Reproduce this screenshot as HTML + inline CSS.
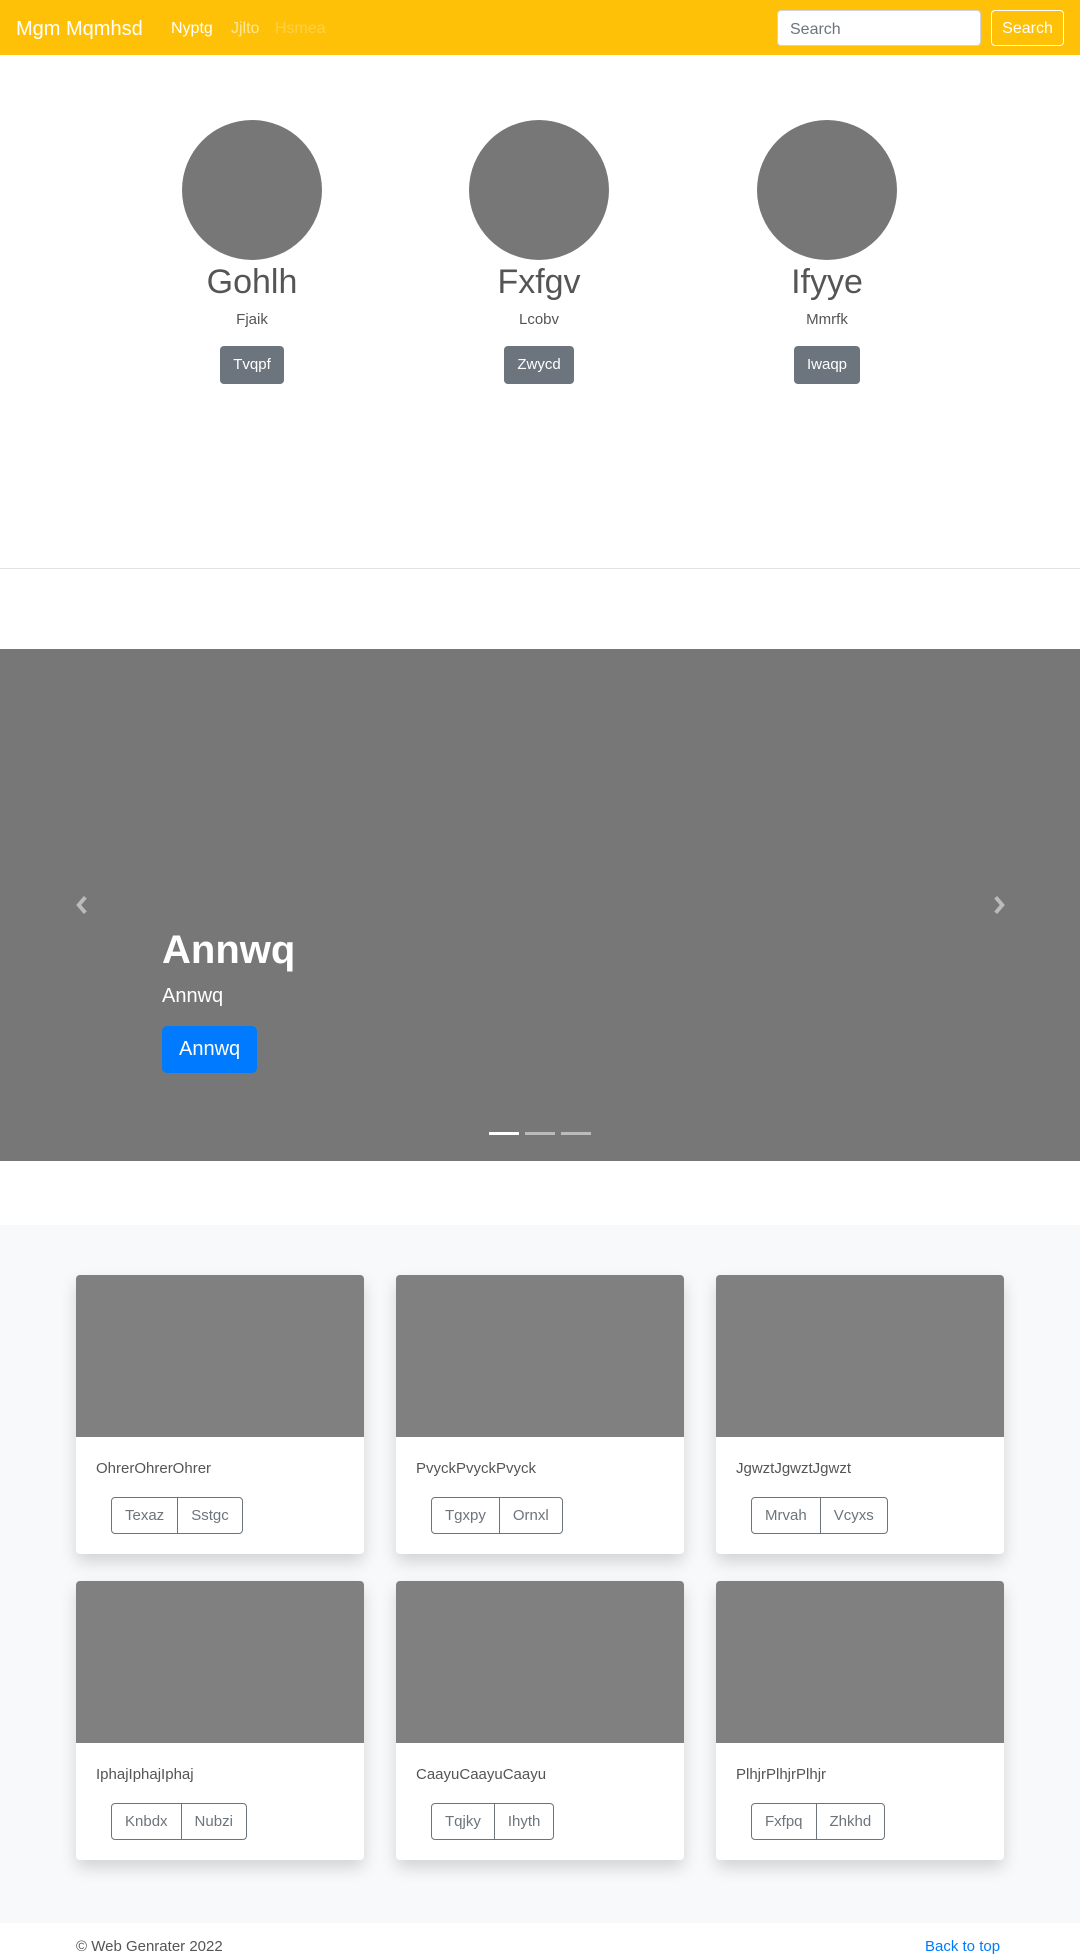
<!DOCTYPE html>
<html><head><meta charset="utf-8"><style>
*{box-sizing:border-box;margin:0;padding:0}
body{width:1080px;height:1957px;font-family:"Liberation Sans",sans-serif;color:#212529;background:#fff;position:relative;overflow:hidden}
.nav{position:absolute;left:0;top:0;width:1080px;height:55px;background:#ffc107}
.brand{position:absolute;left:16px;top:18px;font-size:20px;color:#fff}
.nl{position:absolute;top:20px;font-size:16px}
.sin{position:absolute;left:777px;top:10px;width:204px;height:36px;background:#fff;border:1px solid #ced4da;border-radius:4px;font-size:16px;color:#6c757d;padding:10px 12px 0}
.sbt{position:absolute;left:991px;top:10px;width:73px;height:36px;border:1px solid #fff;border-radius:4px;color:#fff;font-size:16px;text-align:center;line-height:36px}
.col{position:absolute;top:120px;width:240px;text-align:center}
.circ{width:140px;height:140px;border-radius:50%;background:#777;margin:0 auto}
.nm{font-size:34px;color:#555;margin-top:1px;line-height:42px}
.sub{font-size:15px;color:#555;margin-top:7px;line-height:20px}
.gb{display:inline-block;margin-top:16px;background:#6c757d;color:#fff;font-size:15px;height:38px;line-height:38px;padding:0 13px;border-radius:4px}
.hr{position:absolute;left:0;top:568px;width:1080px;height:1px;background:#e2e2e2}
.car{position:absolute;left:0;top:649px;width:1080px;height:512px;background:#777}
.arr{position:absolute;top:245px;width:22px;height:22px}
.cap{position:absolute;left:162px;top:276px;color:#fff}
.cap h1{font-size:40px;font-weight:bold;line-height:50px}
.cap p{font-size:20px;margin-top:10px}
.cap .b{display:inline-block;margin-top:18px;background:#007bff;border-radius:5px;font-size:20px;padding:0 17px;height:47px;line-height:47px}
.ind{position:absolute;top:483px;width:30px;height:3px;background:rgba(255,255,255,.5)}
.gray{position:absolute;left:0;top:1225px;width:1080px;height:698px;background:#f8f9fa}
.card{position:absolute;width:288px;height:279px;background:#fff;border-radius:4px;box-shadow:0 8px 16px rgba(0,0,0,.15);overflow:hidden}
.card .im{height:162px;background:#808080}
.card .t{position:absolute;left:20px;top:185px;font-size:15px;color:#555}
.bg{position:absolute;left:35px;top:222px;display:flex;border:1px solid #6c757d;border-radius:4px;height:37px}
.bg span{font-size:15px;color:#6c757d;padding:0 13px;line-height:35px}
.bg span+span{border-left:1px solid #6c757d}
.foot{position:absolute;top:1938px;font-size:15px}
</style></head><body>
<div class="nav">
<div class="brand">Mgm Mqmhsd</div>
<div class="nl" style="left:171px;color:#fff">Nyptg</div>
<div class="nl" style="left:231px;color:rgba(255,255,255,.6)">Jjlto</div>
<div class="nl" style="left:275px;color:rgba(255,255,255,.25)">Hsmea</div>
<div class="sin">Search</div>
<div class="sbt">Search</div>
</div>
<div class="col" style="left:132px"><div class="circ"></div><div class="nm">Gohlh</div><div class="sub">Fjaik</div><div class="gb">Tvqpf</div></div>
<div class="col" style="left:419px"><div class="circ"></div><div class="nm">Fxfgv</div><div class="sub">Lcobv</div><div class="gb">Zwycd</div></div>
<div class="col" style="left:707px"><div class="circ"></div><div class="nm">Ifyye</div><div class="sub">Mmrfk</div><div class="gb">Iwaqp</div></div>
<div class="hr"></div>
<div class="car">
<svg class="arr" style="left:71px" viewBox="0 0 20 20"><path d="M13 3 L7 10 L13 17" stroke="#bbb" stroke-width="3.5" fill="none"/></svg>
<svg class="arr" style="left:988px" viewBox="0 0 20 20"><path d="M7 3 L13 10 L7 17" stroke="#bbb" stroke-width="3.5" fill="none"/></svg>
<div class="cap"><h1>Annwq</h1><p>Annwq</p><div class="b">Annwq</div></div>
<div class="ind" style="left:489px;background:#fff"></div>
<div class="ind" style="left:525px"></div>
<div class="ind" style="left:561px"></div>
</div>
<div class="gray">
<div class="card" style="left:76px;top:50px"><div class="im"></div><div class="t">OhrerOhrerOhrer</div><div class="bg"><span>Texaz</span><span>Sstgc</span></div></div>
<div class="card" style="left:396px;top:50px"><div class="im"></div><div class="t">PvyckPvyckPvyck</div><div class="bg"><span>Tgxpy</span><span>Ornxl</span></div></div>
<div class="card" style="left:716px;top:50px"><div class="im"></div><div class="t">JgwztJgwztJgwzt</div><div class="bg"><span>Mrvah</span><span>Vcyxs</span></div></div>
<div class="card" style="left:76px;top:356px"><div class="im"></div><div class="t">IphajIphajIphaj</div><div class="bg"><span>Knbdx</span><span>Nubzi</span></div></div>
<div class="card" style="left:396px;top:356px"><div class="im"></div><div class="t">CaayuCaayuCaayu</div><div class="bg"><span>Tqjky</span><span>Ihyth</span></div></div>
<div class="card" style="left:716px;top:356px"><div class="im"></div><div class="t">PlhjrPlhjrPlhjr</div><div class="bg"><span>Fxfpq</span><span>Zhkhd</span></div></div>
</div>
<div class="foot" style="left:76px;color:#555">© Web Genrater 2022</div>
<div class="foot" style="left:925px;color:#007bff">Back to top</div>
</body></html>
